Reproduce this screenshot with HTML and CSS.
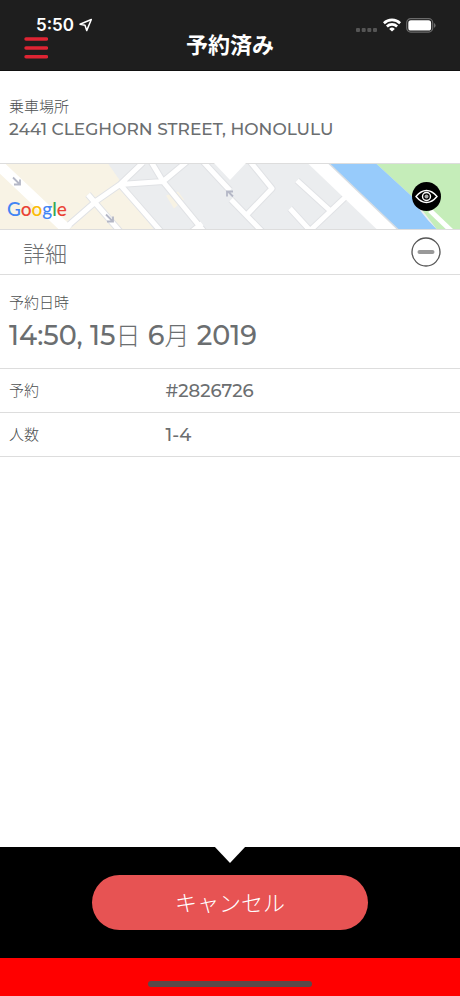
FILE: index.html
```html
<!DOCTYPE html>
<html lang="ja">
<head>
<meta charset="utf-8">
<meta name="viewport" content="width=device-width, initial-scale=1">
<title>予約済み</title>
<link rel="stylesheet" href="styles.css">
</head>
<body>
<div class="app">
  <header class="header">
    <div class="status">
      <div class="status-group">
        <span class="clock">5:50</span>
        <svg width="14" height="14" viewBox="0 0 14 14" fill="none" stroke="#fff" stroke-width="1.5" stroke-linejoin="round"><path d="M12.300 1.500 1 6.200 6 7.200 7.700 12.600Z"/></svg>
      </div>
      <div class="status-group">
        <svg class="signal" width="22" height="4" viewBox="0 0 22 4" fill="#555"><rect x="0" width="4" height="4" rx="1"/><rect x="5.700" width="4" height="4" rx="1"/><rect x="11.300" width="4" height="4" rx="1"/><rect x="17" width="4" height="4" rx="1"/></svg>
        <svg width="18" height="14" viewBox="0 0 18 14" fill="none" stroke="#fff" stroke-width="2.600"><path d="M.9 5.200a11.600 11.600 0 0 1 16.200 0M3.900 8.500a7.300 7.300 0 0 1 10.200 0"/><path d="M9 13.600 6.200 10.900a4 4 0 0 1 5.600 0Z" fill="#fff" stroke="none"/></svg>
        <svg width="30" height="15" viewBox="0 0 30 15"><rect x=".7" y=".7" width="26" height="13.400" rx="4" fill="none" stroke="#6a6a6a" stroke-width="1.200"/><rect x="2.300" y="2.300" width="22.800" height="10.200" rx="2.600" fill="#fff"/><path d="M28 5q1.600.7 1.600 2.400T28 9.800Z" fill="#6a6a6a"/></svg>
      </div>
    </div>
    <div class="titlebar">
      <button class="menu" type="button" aria-label="メニュー"><svg width="24" height="22" viewBox="0 0 24 22" stroke="#df2433" stroke-width="3.400" stroke-linecap="round"><path d="M2 2h20.500M2 11h20.500M2 19.700h20.500"/></svg></button>
      <h1>予約済み</h1>
    </div>
  </header>

  <main>
    <section class="pickup">
      <h2 class="label">乗車場所</h2>
      <p class="address">2441 CLEGHORN STREET, HONOLULU</p>
    </section>

    <section class="map notch">
      <svg class="map-art" viewBox="0 0 460 66" preserveAspectRatio="xMidYMid slice" aria-hidden="true">
        <defs>
          <path id="streets" d="M66 64 97 37 120 21 143-1M88 31 120 68M120 21 161 68M120 21 163 18M151-2 163 18 204 68M163 18 187-2M192 68 202 60M203-2 230 27M231 36 264 70M250-2 272 25 248 50M297 17 330 47M290 45 311 68M345 34 309 68"/>
        </defs>
        <rect width="460" height="66" fill="#ebedef"/>
        <path d="M0 0H108L122 20 133 38 154 66H0Z" fill="#f8f3e5"/>
        <path d="M166 32 178 28 184 36 174 45Z" fill="#f7f2e3"/>
        <path d="M376 0H460V66H437L412 33Z" fill="#c5edb9"/>
        <path d="M329 0H376L412 33Q420 50 437 66H398Z" fill="#97cbfb"/>
        <use class="street-edge" href="#streets"/>
        <use class="street" href="#streets"/>
        <path class="street wide" d="M-4-1 68 67"/>
        <path d="M308 0H329L398 66H377Z" fill="#fff"/>
        <path d="M329 0 398 66" stroke="#d7dde3" stroke-width="1.500"/>
        <path class="street" d="M430 47 452 68"/>
        <g fill="none" stroke="#b4b7c6" stroke-width="1.800"><path d="M13 14 19 20M20 16v5h-6M106 51 112 57M113 53v5h-6M233 33 228 28M227 33v-5h6"/></g>
      </svg>
      <span class="google"><span class="g-blue">G</span><span class="g-red">o</span><span class="g-yellow">o</span><span class="g-blue">g</span><span class="g-green">l</span><span class="g-red">e</span></span>
      <button class="eye" type="button" aria-label="地図を表示"><svg width="29" height="29" viewBox="0 0 29 29" fill="none" stroke="#fff" stroke-width="1.400"><circle cx="14.500" cy="14.500" r="14.500" fill="#000" stroke="none"/><path d="M4 14.500Q9 8.500 14.500 8.500T25 14.500Q20 20.500 14.500 20.500T4 14.500Z"/><circle cx="14.500" cy="14.500" r="4"/><circle cx="14.500" cy="14.500" r="2" fill="#aaa" stroke="none"/></svg></button>
    </section>

    <section>
      <div class="details-head">
        <h2>詳細</h2>
        <button type="button" aria-label="詳細を閉じる"><svg width="30" height="30" viewBox="0 0 30 30" fill="none"><circle cx="15" cy="15" r="14" stroke="#555" stroke-width="1.300"/><path d="M8.500 15h13" stroke="#999" stroke-width="4" stroke-linecap="round"/></svg></button>
      </div>
      <div class="when">
        <h3 class="label">予約日時</h3>
        <p class="datetime">14:50, 15<span class="unit">日</span> 6<span class="unit">月</span> 2019</p>
      </div>
      <table>
        <tr><th scope="row">予約</th><td>#2826726</td></tr>
        <tr><th scope="row">人数</th><td>1-4</td></tr>
      </table>
    </section>
  </main>

  <footer>
    <div class="actions notch">
      <button class="cancel" type="button">キャンセル</button>
    </div>
    <div class="home"><span class="home-bar"></span></div>
  </footer>
</div>
</body>
</html>
```
FILE: styles.css
```css
* {
  box-sizing: border-box;
}

body {
  margin: 0;
  background: #fff;
  color: #6b6e70;
  font-family: Montserrat, Inter, "Noto Sans CJK JP", sans-serif;
}

h1, h2, h3, p {
  margin: 0;
}

button {
  padding: 0;
  border: 0;
  background: none;
  font-family: inherit;
  cursor: pointer;
}

svg {
  display: block;
}

.app {
  display: flex;
  flex-direction: column;
  min-height: 100vh;
}

main {
  flex: 1;
}

.header {
  padding-top: 16px;
  border-bottom: 1px solid #111;
  background: #1e1e1e;
  color: #fff;
}

.status {
  display: flex;
  justify-content: space-between;
  height: 18px;
  padding: 0 24px 0 36px;
}

.status-group {
  display: flex;
  align-items: center;
  gap: 5px;
}

.signal {
  align-self: flex-end;
  margin-bottom: 2px;
}

.clock {
  font-family: Inter, sans-serif;
  font-size: 17px;
  font-weight: 600;
  line-height: 18px;
}

.titlebar {
  display: grid;
  grid-template-columns: 24px 1fr 24px;
  padding: 0 24px;
}

.menu {
  align-self: start;
  padding-top: 3px;
}

h1 {
  padding-bottom: 12px;
  font-size: 22px;
  font-weight: 700;
  line-height: 24px;
  text-align: center;
}

.pickup {
  padding: 26px 9px 22px;
  border-bottom: 1px solid #ddd;
}

.label,
th {
  color: #4c4f50;
  font-size: 15px;
  font-weight: 300;
  line-height: 20px;
}

.address {
  font-size: 17px;
  font-weight: 500;
  line-height: 24px;
}

.notch {
  position: relative;
}

.notch::before {
  position: absolute;
  top: -1px;
  left: 50%;
  margin-left: -16px;
  border: 16px solid transparent;
  border-top: 17px solid #fff;
  border-bottom: 0;
  content: "";
}

.map {
  border-bottom: 1px solid #ddd;
}

.map-art {
  width: 100%;
  height: 65px;
}

.street,
.street-edge {
  fill: none;
  stroke: #fff;
  stroke-linejoin: round;
  stroke-width: 5px;
}

.street-edge {
  stroke: #e0e2e5;
  stroke-width: 7px;
}

.wide {
  stroke-width: 11px;
}

.google {
  position: absolute;
  bottom: 8px;
  left: 7px;
  font-family: Lato, sans-serif;
  font-size: 19px;
  font-weight: 500;
  line-height: 24px;
}

.g-blue { color: #4285f4; }
.g-red { color: #ea4335; }
.g-yellow { color: #fbbc05; }
.g-green { color: #34a853; }

.eye {
  position: absolute;
  top: 18px;
  right: 19px;
}

.details-head {
  display: flex;
  align-items: center;
  justify-content: space-between;
  height: 45px;
  padding: 0 19px 0 23px;
  border-bottom: 1px solid #ddd;
}

.details-head h2 {
  font-size: 22px;
  font-weight: 300;
}

.when {
  padding: 18px 9px 14px;
}

.datetime {
  padding-top: 5px;
  font-size: 27px;
  font-weight: 500;
  line-height: 36px;
}

.unit {
  font-size: 25px;
  font-weight: 300;
}

table {
  width: 100%;
  border-collapse: collapse;
}

tr {
  height: 44px;
  border-top: 1px solid #ddd;
  border-bottom: 1px solid #ddd;
}

th {
  width: 36%;
  padding: 0 9px;
  text-align: left;
}

td {
  padding: 0;
  font-size: 18px;
  font-weight: 500;
}

.actions {
  padding: 28px 20%;
  background: #000;
}

.cancel {
  display: block;
  width: 100%;
  height: 55px;
  padding-bottom: 4px;
  border-radius: 28px;
  background: #e75353;
  color: #fff;
  font-size: 22px;
  font-weight: 300;
}

.home {
  display: flex;
  justify-content: center;
  height: 38px;
  padding-top: 23px;
  background: #f00;
}

.home-bar {
  width: 164px;
  height: 6px;
  border-radius: 3px;
  background: #5a4a4a;
}
```
